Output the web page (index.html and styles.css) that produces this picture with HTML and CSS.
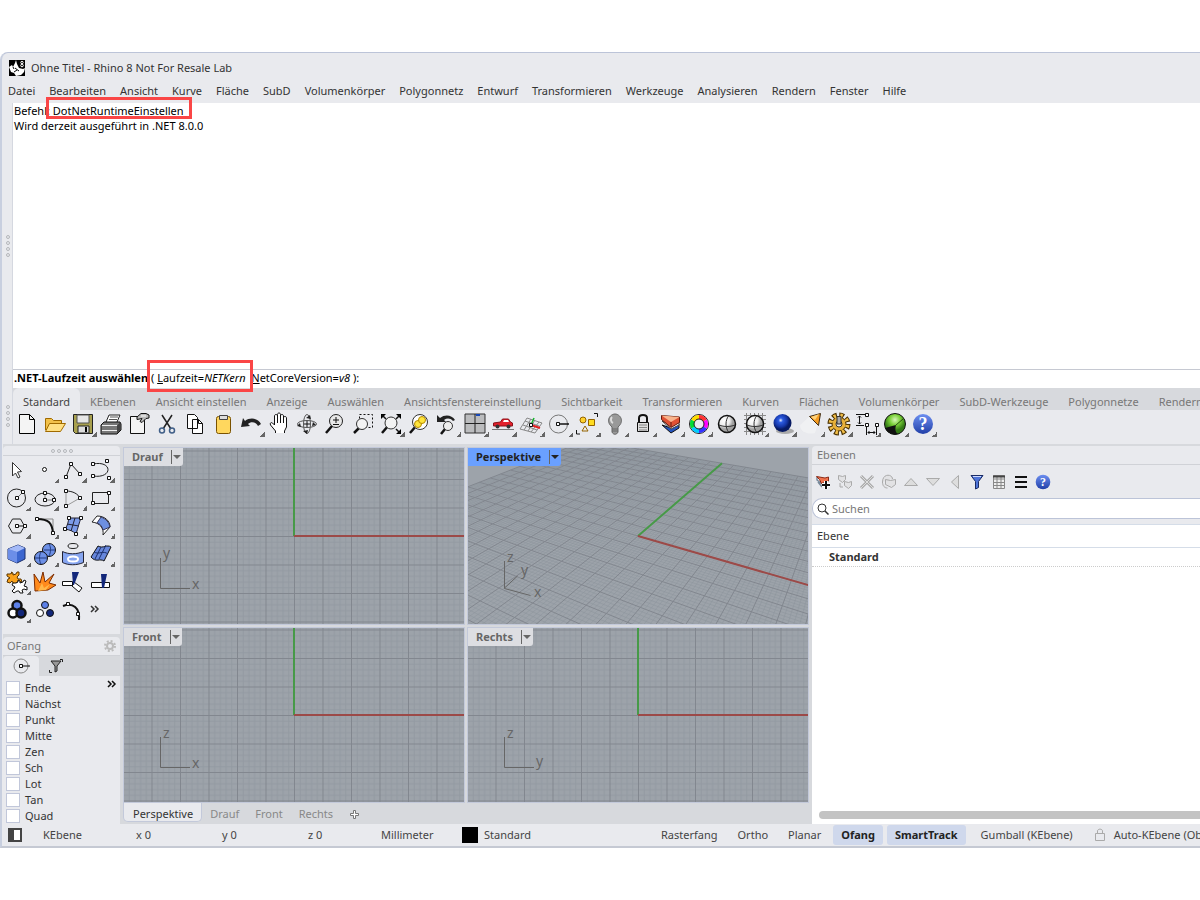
FILE: index.html
```html
<!DOCTYPE html>
<html lang="de">
<head>
    <meta charset="utf-8">
    <title>Ohne Titel - Rhino 8 Not For Resale Lab</title>
    <link rel="stylesheet" href="styles.css">
</head>
<body>
    <div class="window">
        <header class="titlebar">
            <svg width="16" height="16" viewBox="0 0 16 16"><rect width="16" height="16"/><path d="M0 7l3-2 1 2 2-4 1-3 1 4 2 4 4 1 2-1-1 4-3 3-5 1-2-3-3-1z" fill="#fff"/><path d="M6 8l4 3M4 7l1 2M5 12l3-2" stroke="#000"/><circle cx="13" cy="2.500" r="1.200" fill="none" stroke="#fff"/><circle cx="13" cy="5.500" r="1.300" fill="none" stroke="#fff"/></svg>
            <span>Ohne Titel - Rhino 8 Not For Resale Lab</span>
        </header>
        <nav class="menubar">
            <button>Datei</button><button>Bearbeiten</button><button>Ansicht</button><button>Kurve</button><button>Fläche</button><button>SubD</button><button>Volumenkörper</button><button>Polygonnetz</button><button>Entwurf</button><button>Transformieren</button><button>Werkzeuge</button><button>Analysieren</button><button>Rendern</button><button>Fenster</button><button>Hilfe</button>
        </nav>

        <section class="command">
            <div class="grip"><i></i><i></i><i></i><i></i></div>
            <div class="command-body">
                <div class="history">
                    <div>Befehl: <span class="boxed">DotNetRuntimeEinstellen</span></div>
                    <div>Wird derzeit ausgeführt in .NET 8.0.0</div>
                </div>
                <div class="prompt"><b>.NET-Laufzeit auswählen</b> <span class="boxed tall">( <u>L</u>aufzeit=<em>NETKern</em></span>&nbsp; <u>N</u>etCoreVersion=<em>v8</em> ):</div>
            </div>
        </section>

        <section class="toolbars">
            <div class="grip"><i></i><i></i><i></i><i></i></div>
            <div class="toolbars-body">
                <div class="tabs">
                    <button class="active">Standard</button><button>KEbenen</button><button>Ansicht einstellen</button><button>Anzeige</button><button>Auswählen</button><button>Ansichtsfenstereinstellung</button><button>Sichtbarkeit</button><button>Transformieren</button><button>Kurven</button><button>Flächen</button><button>Volumenkörper</button><button>SubD-Werkzeuge</button><button>Polygonnetze</button><button>Rendern</button>
                </div>
                <div class="tools">
                    <button class="tool" aria-label="Neu"><svg viewBox="0 0 24 24"><path d="M4.500 2.500h10l5 5v14h-15z" fill="#f4f4f4" stroke="#000"/><path d="M14.500 2.500v5h5" fill="none" stroke="#000"/></svg></button>
                    <button class="tool" aria-label="Öffnen"><svg viewBox="0 0 24 24"><path d="M2.500 18V6.500h6l2 2h8v4" fill="#f2c14a" stroke="#a06a00"/><path d="M2.500 19.500l4-8h16l-5 8z" fill="#ffe083" stroke="#a06a00"/></svg></button>
                    <button class="tool fly" aria-label="Speichern"><svg viewBox="0 0 24 24"><path d="M2.500 2.500h19v19h-17l-2-2z" fill="#a8a04e" stroke="#222"/><path d="M6 3h12v8H6z" fill="#e6e6e6" stroke="#555"/><path d="M7 14h11v7H7z" fill="#ddd" stroke="#222"/><path d="M14 15h2v5h-2z"/></svg></button>
                    <button class="tool" aria-label="Drucken"><svg viewBox="0 0 24 24"><path d="M7 10l3-7h11l-3 7" fill="#fff" stroke="#222"/><path d="M11 5h8M10 7.500h8" stroke="#555"/><path d="M2 13l3-3h16l1 2v6l-4 4H2z" fill="#777" stroke="#111"/><path d="M3 13.500h15M3 18.500h15" stroke="#eee"/><path d="M18 13.500v8l3-3v-8z" fill="#444"/></svg></button>
                    <button class="tool" aria-label="Dokumenteigenschaften"><svg viewBox="0 0 24 24"><path d="M3.500 4.500h14v17h-14z" fill="#f4f4f4" stroke="#111"/><path d="M10 5l4-3.500h5l3 1.500v3l-3 .5-4 4-2-1 2-3-5 1z" fill="#bbb" stroke="#111"/><path d="M14 4h5" stroke="#fff"/></svg></button>
                    <button class="tool" aria-label="Ausschneiden"><svg viewBox="0 0 24 24"><path d="M7 3l9 14M17 3L8 17" stroke="#222" stroke-width="1.500"/><circle cx="7" cy="18.500" r="2.500" fill="none" stroke="#405f88" stroke-width="1.500"/><circle cx="17" cy="18.500" r="2.500" fill="none" stroke="#405f88" stroke-width="1.500"/></svg></button>
                    <button class="tool" aria-label="Kopieren"><svg viewBox="0 0 24 24"><path d="M4.500 2.500h7l3 3v11h-10zM9.500 7.500h6l4 4v10h-10z" fill="#fff" stroke="#111"/><path d="M15.500 7.500v4h4" fill="none" stroke="#111"/></svg></button>
                    <button class="tool" aria-label="Einfügen"><svg viewBox="0 0 24 24"><rect x="5.500" y="4.500" width="14" height="17" rx="2" fill="#ffd75e" stroke="#7a5200"/><path d="M8.500 3.500h8v4h-8z" fill="#ddd" stroke="#444"/></svg></button>
                    <button class="tool fly" aria-label="Rückgängig"><svg viewBox="0 0 24 24"><path d="M2 15l2-9 2 3c5-4 13-3 16 3l-3 2c-2-4-7-5-10-2l2 2z" fill="#222"/></svg></button>
                    <button class="tool" aria-label="Verschieben"><svg viewBox="0 0 24 24"><path d="M8.500 21v-2l-5-6c-1-2 1-3 2-2l2 2V4c0-2 3-2 3 0V2.500c0-2 3-2 3 0V4c0-2 3-2 3 0v2c0-2 3-2 3 0v9l-2 4v2" fill="#fff" stroke="#111"/><path d="M10.500 4v7M13.500 4v7M16.500 5v6" stroke="#111"/></svg></button>
                    <button class="tool" aria-label="Drehen"><svg viewBox="0 0 24 24" fill="none" stroke="#555"><ellipse cx="12" cy="12" rx="9.500" ry="3.500"/><ellipse cx="12" cy="12" rx="3.500" ry="9.500"/><path d="M11 6l4-3 1 4zM8 19l4 3 1-4zM5 11l-3 3 4 1zM18 10l3 3-4 1z" fill="#222" stroke="none"/><path d="M12 9v6M9 12h6" stroke="#111"/></svg></button>
                    <button class="tool" aria-label="Zoom dynamisch"><svg viewBox="0 0 24 24"><path d="M9 14l-6 7" stroke="#111" stroke-width="2.500"/><circle cx="13" cy="9" r="6.500" fill="#e8e8e8" stroke="#222"/><path d="M10 8h6M13 5v6M10 12.500h6" stroke="#111"/></svg></button>
                    <button class="tool" aria-label="Zoom Fenster"><svg viewBox="0 0 24 24"><path d="M8.500 2.500h13v13h-13z" fill="none" stroke="#111" stroke-dasharray="2 2"/><path d="M8 16l-5 5" stroke="#111" stroke-width="2.500"/><circle cx="11" cy="12" r="5.500" fill="#f3f3f3" stroke="#333"/></svg></button>
                    <button class="tool fly" aria-label="Zoom Grenzen"><svg viewBox="0 0 24 24"><path d="M9 14l-6 7" stroke="#111" stroke-width="2.500"/><circle cx="12" cy="11" r="6" fill="#f3f3f3" stroke="#333"/><path d="M2 7V2h5zM17 2h5v5zM22 17v5h-5z"/><path d="M3 3l4 4M21 3l-4 4M21 21l-4-4" stroke="#111" stroke-width="1.500"/></svg></button>
                    <button class="tool" aria-label="Zoom Auswahl"><svg viewBox="0 0 24 24"><path d="M9 14l-6 7" stroke="#111" stroke-width="2.500"/><circle cx="13" cy="10" r="7.500" fill="#fff" stroke="#333"/><circle cx="11" cy="12" r="3.500" fill="#ffe53b" stroke="#b58900"/><circle cx="15" cy="8" r="3.500" fill="#ffe53b" stroke="#b58900"/></svg></button>
                    <button class="tool fly" aria-label="Ansicht zurück"><svg viewBox="0 0 24 24"><path d="M2 10V3l3 3c5-4 12-3 15 2l-2 1c-3-3-6-3-9-1l2 2z" fill="#222"/><path d="M10 17l-4 5" stroke="#111" stroke-width="2.500"/><circle cx="13" cy="14" r="4.500" fill="#eee" stroke="#333"/></svg></button>
                    <button class="tool fly" aria-label="4 Ansichtsfenster"><svg viewBox="0 0 24 24"><path d="M2 2h20v19H2z" fill="#bbbcbe" stroke="#333"/><path d="M12 2v19M2 11.500h20" stroke="#222"/><path d="M13 3h4" stroke="#1849b8" stroke-width="2"/></svg></button>
                    <button class="tool fly" aria-label="Rechte Ansicht"><svg viewBox="0 0 24 24"><path d="M2.500 14v-3l7-1 2-3h6l2 3 2 1v3z" fill="#e3202b" stroke="#8c1118"/><path d="M12 10l1-2h4l1 2z" fill="#fff"/><circle cx="6.500" cy="14.500" r="2" fill="#333"/><circle cx="17.500" cy="14.500" r="2" fill="#333"/><path d="M1 17.500h22" stroke="#777"/></svg></button>
                    <button class="tool fly" aria-label="KEbene setzen"><svg viewBox="0 0 24 24"><path d="M8 6l15 5-7 10-15-4zM6 9l14 5M4 13l14 5M12 7L5 18M16 8l-7 11M20 10l-8 10" fill="none" stroke="#888"/><path d="M12 13l3-7" stroke="#12b32a" stroke-width="1.500"/><path d="M12 13l9 3" stroke="#e32020" stroke-width="2"/><path d="M10.500 11.500h3v3h-3z" fill="#fff" stroke="#111"/></svg></button>
                    <button class="tool fly" aria-label="Objektfang"><svg viewBox="0 0 24 24"><circle cx="11.500" cy="12" r="9" fill="none" stroke="#777"/><path d="M12 12h10" stroke="#111" stroke-width="1.500"/><path d="M9.500 10.500h3v3h-3z" fill="#fff" stroke="#111"/></svg></button>
                    <button class="tool fly" aria-label="Auswählen"><svg viewBox="0 0 24 24"><circle cx="8" cy="8" r="3" fill="#ffd22e" stroke="#946300"/><path d="M13.500 7.500h6v6h-6z" fill="#ffdc20" stroke="#946300"/><path d="M10 14l3 5H7z" fill="#eee" stroke="#946300"/><path d="M19 1.500h3.500V5M1.500 18v4H5" fill="none" stroke="#111"/></svg></button>
                    <button class="tool fly" aria-label="Ausblenden"><svg viewBox="0 0 24 24"><path d="M9 15C2 9 7 2 12 2s10 7 3 13v5c-1 3-5 3-6 0z" fill="#999" stroke="#666"/><path d="M9 5c-2 2-1 5 1 6" stroke="#ddd" stroke-width="2" fill="none"/><path d="M9 17h6M9 19h6" stroke="#666"/></svg></button>
                    <button class="tool fly" aria-label="Sperren"><svg viewBox="0 0 24 24"><path d="M8 11V6c0-4 8-4 8 0v5" fill="none" stroke="#111" stroke-width="2"/><path d="M6.500 10.500h11v9h-11z" fill="#ddd" stroke="#111"/><path d="M8 13h8M8 15.500h8M8 18h8" stroke="#888"/></svg></button>
                    <button class="tool fly" aria-label="Ebenen"><svg viewBox="0 0 24 24"><path d="M3 13l9 8 8-5v-4l-8 4z" fill="#2353bd" stroke="#111"/><path d="M3 9l9 8 8-4V9l-8 4z" fill="#fff" stroke="#444"/><path d="M2.500 3.500v4l9.500 8 8.500-5V5z" fill="#e05234" stroke="#621a0d"/><path d="M2.500 3.500l18 1.500-8.500 5z" fill="#f8b48c"/><path d="M12 10v5" stroke="#621a0d"/></svg></button>
                    <button class="tool fly" aria-label="Eigenschaften"><svg viewBox="0 0 24 24" fill="none" stroke-width="4"><circle cx="12" cy="12" r="9.500" stroke="#222" stroke-width="1"/><path d="M12 5a7 7 0 0 1 6 3.500" stroke="#f33"/><path d="M18 8.500a7 7 0 0 1 0 7" stroke="#f0f"/><path d="M18 15.500a7 7 0 0 1-6 3.500" stroke="#33f"/><path d="M12 19a7 7 0 0 1-6-3.500" stroke="#0cf"/><path d="M6 15.500a7 7 0 0 1 0-7" stroke="#0d3"/><path d="M6 8.500A7 7 0 0 1 12 5" stroke="#fd0"/><circle cx="12" cy="12" r="5" stroke="#222" stroke-width="1"/></svg></button>
                    <button class="tool" aria-label="Schattiert"><svg viewBox="0 0 24 24"><circle cx="12" cy="12" r="8.500" fill="url(#greyball)" stroke="#111" stroke-width="1.500"/><path d="M14 3.500c-4 4-4 13 0 17M4 13c5 2 11 2 16 0" fill="none" stroke="#333"/></svg></button>
                    <button class="tool fly" aria-label="Schattiertes Fenster"><svg viewBox="0 0 24 24"><path d="M1 3.500h22M1 7.500h22M1 11.500h22M1 15.500h22M1 19.500h22M3.500 1v22M7.500 1v22M11.500 1v22M15.500 1v22M19.500 1v22" stroke="#888"/><circle cx="12" cy="12" r="8.500" fill="url(#greyball)" stroke="#111" stroke-width="1.500"/><path d="M14 3.500c-4 4-4 13 0 17M4 13c5 2 11 2 16 0" fill="none" stroke="#333"/></svg></button>
                    <button class="tool fly" aria-label="Rendern"><svg viewBox="0 0 24 24"><ellipse cx="14" cy="19" rx="9" ry="3" fill="#aaa"/><circle cx="11.500" cy="11" r="9" fill="url(#blueball)"/></svg></button>
                    <button class="tool fly" aria-label="Licht"><svg viewBox="0 0 24 24"><path d="M11 4L1 13c0 7 8 10 15 8l3-9z" fill="#f8f8f8" opacity=".5"/><path d="M10.500 4.500l11-3-2 12z" fill="#f59b20" stroke="#3d2a12"/><path d="M12 5l8-3-4 6z" fill="#ffd27a"/></svg></button>
                    <button class="tool fly" aria-label="Optionen"><svg viewBox="0 0 24 24"><circle cx="12" cy="12" r="8.500" fill="none" stroke="#493000" stroke-width="6" stroke-dasharray="4.400 2.280"/><circle cx="12" cy="12" r="7" fill="#e7b03a" stroke="#493000"/><circle cx="12" cy="12" r="8.500" fill="none" stroke="#f0bd48" stroke-width="4" stroke-dasharray="2.400 4.280" stroke-dashoffset="-1"/><circle cx="12" cy="12" r="3" fill="#eee" stroke="#333"/><path d="M10 4.500h4V12h-4z" fill="#aaa" stroke="#333"/></svg></button>
                    <button class="tool fly" aria-label="Bemaßung"><svg viewBox="0 0 24 24" fill="none" stroke="#111"><path d="M1 2.500h9M1 13.500h8M4.500 4v8M3 5.500L4.500 4 6 5.500M3 10.500L4.500 12 6 10.500M11.500 13v10M21.500 13v10M13 20.500h7M14.500 19L13 20.500l1.500 1.500M18.500 19l1.500 1.500-1.500 1.500"/><path d="M10.500 1.500h3v3h-3zM10.500 11.500h3v3h-3zM20.500 11.500h3v3h-3z" fill="#fff"/></svg></button>
                    <button class="tool fly" aria-label="Grasshopper"><svg viewBox="0 0 24 24"><circle cx="12" cy="12" r="10.500" fill="url(#greenball)" stroke="#111"/><path d="M2 16l11-3c-1 4-1 7 2 9-6 1-11-1-13-6z" fill="#111"/><path d="M13 13l7-6" stroke="#294f12"/></svg></button>
                    <button class="tool fly" aria-label="Hilfe"><svg viewBox="0 0 24 24"><circle cx="12" cy="12" r="10" fill="url(#helpball)"/><text class="q" x="12" y="18">?</text></svg></button>
                </div>
            </div>
        </section>

        <main class="main">
            <aside class="sidebar">
                <div class="toolbox">
                    <div class="toolbox-grip"><i></i><i></i><i></i><i></i></div>
                    <div class="toolbox-grid">
                        <button class="tool" aria-label="Auswahl"><svg viewBox="0 0 24 24"><path d="M7.500 4.500l9 9-4 .5 2.500 5-2 1-2.500-5-3 3z" fill="#fff" stroke="#333"/></svg></button>
                        <button class="tool fly" aria-label="Punkt"><svg viewBox="0 0 24 24"><circle cx="11.500" cy="11.500" r="2" fill="#fff" stroke="#111"/></svg></button>
                        <button class="tool fly" aria-label="Polylinie"><svg viewBox="0 0 24 24"><path d="M5 19l5-13 9 10" fill="none" stroke="#222"/><path d="M3.500 17.500h3v3h-3zM8.500 4.500h3v3h-3zM17.500 14.500h3v3h-3z" fill="#fff" stroke="#111"/></svg></button>
                        <button class="tool fly" aria-label="Kurve"><svg viewBox="0 0 24 24"><path d="M4 6c20-4 20 15 0 12" fill="none" stroke="#222"/><path d="M2.500 4.500h3v3h-3zM2.500 16.500h3v3h-3zM16.500 1.500h3v3h-3zM18.500 18.500h3v3h-3z" fill="#fff" stroke="#111"/></svg></button>

                        <button class="tool fly" aria-label="Kreis"><svg viewBox="0 0 24 24"><circle cx="11.500" cy="12" r="9" fill="none" stroke="#222"/><path d="M12 12l6-6" stroke="#777"/><path d="M10.500 10.500h3v3h-3zM16.500 4.500h3v3h-3z" fill="#fff" stroke="#111"/></svg></button>
                        <button class="tool fly" aria-label="Ellipse"><svg viewBox="0 0 24 24"><ellipse cx="12" cy="13.500" rx="10" ry="6.500" fill="none" stroke="#222"/><path d="M12 14h9M12 14V6" stroke="#777"/><path d="M10.500 12.500h3v3h-3zM10.500 5.500h3v3h-3zM19.500 12.500h3v3h-3z" fill="#fff" stroke="#111"/></svg></button>
                        <button class="tool fly" aria-label="Bogen"><svg viewBox="0 0 24 24"><path d="M5 20V5M5 20l14-8" stroke="#999"/><path d="M5 5c7 0 12 3 14 7" fill="none" stroke="#222"/><path d="M3.500 3.500h3v3h-3zM3.500 18.500h3v3h-3zM17.500 10.500h3v3h-3z" fill="#fff" stroke="#111"/></svg></button>
                        <button class="tool fly" aria-label="Rechteck"><svg viewBox="0 0 24 24"><path d="M3.500 6.500h16v11h-16z" fill="none" stroke="#222"/><path d="M2.500 15.500h3v3h-3zM18.500 5.500h3v3h-3z" fill="#fff" stroke="#111"/></svg></button>

                        <button class="tool fly" aria-label="Polygon"><svg viewBox="0 0 24 24"><path d="M3.500 12l4-7h8l4 7-4 7h-8z" fill="none" stroke="#222"/><path d="M12 12h8" stroke="#111"/><path d="M10.500 10.500h3v3h-3zM18.500 10.500h3v3h-3z" fill="#fff" stroke="#111"/></svg></button>
                        <button class="tool fly" aria-label="Verrundung"><svg viewBox="0 0 24 24"><path d="M4 5h16v15" fill="none" stroke="#888"/><path d="M4 5c12 0 15 4 16 14" fill="none" stroke="#111" stroke-width="2"/><path d="M2.500 3.500h3v3h-3zM18.500 17.500h3v3h-3z" fill="#fff" stroke="#111"/></svg></button>
                        <button class="tool fly" aria-label="Fläche"><svg viewBox="0 0 24 24"><path d="M8 4h12c-2 5-3 10-5 16-3-3-6-4-11-5 3-4 3-7 4-11z" fill="#7c9be8" stroke="#223"/><path d="M14 4l-4 13M6 10l12 2" stroke="#223"/><path d="M6.500 2.500h3v3h-3zM18.500 2.500h3v3h-3zM2.500 13.500h3v3h-3zM13.500 18.500h3v3h-3z" fill="#fff" stroke="#111"/></svg></button>
                        <button class="tool fly" aria-label="Extrusion"><svg viewBox="0 0 24 24"><path d="M3 8l5-6c8 0 13 5 13 11l-7 8c1-7-3-12-11-13z" fill="#fff" stroke="#222"/><path d="M12 3c5 2 8 5 9 10l-7 3c-1-4-3-6-6-7z" fill="#6d8fe0" stroke="#335"/></svg></button>

                        <button class="tool fly" aria-label="Quader"><svg viewBox="0 0 24 24"><path d="M3 7l10-4 7 3v11l-8 4-9-4z" fill="#3c66cf" stroke="#1b2f6b"/><path d="M3 7l9 3v11l-9-4z" fill="#6c8ee8"/><path d="M3 7l10-4 7 3-8 4z" fill="#a4baf8"/></svg></button>
                        <button class="tool fly" aria-label="Boolesche Operation"><svg viewBox="0 0 24 24"><circle cx="16" cy="8" r="6.500" fill="#6d90e6" stroke="#111"/><circle cx="8" cy="16" r="6.500" fill="#6d90e6" stroke="#111"/><path d="M2 16h12M8 10c-2 3-2 9 0 12M11 8h11M16 2c2 3 2 8 0 12" fill="none" stroke="#223b80"/></svg></button>
                        <button class="tool fly" aria-label="Projektion"><svg viewBox="0 0 24 24"><ellipse cx="12" cy="4" rx="5" ry="2.500" fill="none" stroke="#222"/><path d="M1.500 9.500c6 3 14 3 21 0v11c-7 3-15 3-21 0z" fill="#86a5f0" stroke="#223"/><ellipse cx="12" cy="17" rx="5" ry="2.500" fill="none" stroke="#fff" stroke-width="2"/></svg></button>
                        <button class="tool fly" aria-label="Netz"><svg viewBox="0 0 24 24"><path d="M2 15l7-11c5 3 9-2 13 1l-7 14c-4-3-8 2-13-4z" fill="#6787dc" stroke="#111"/><path d="M5 10c5 3 9-2 14 2M10 17l7-14M6 17l6-12" fill="none" stroke="#1b2f6b"/></svg></button>

                        <button class="tool fly" aria-label="Verbinden"><svg viewBox="0 0 24 24"><path d="M6 2l2 1v2l3-1 1-2h2l0 3-2 2 1 2 3 0 1 3-3 0-2 0-1 2-3-1-1-2-2 2-3-1 1-3 2-1-3-2 0-2 3 0 2-1z" fill="#f9a11b" stroke="#5a3600"/><path d="M13 10l2 1v2l3-1 1-2 2 1-1 3-1 2 3 1v3l-3-1-2 1 1 3-3 0-1-2-2 0-3 2-2-2 2-2 1-2-3-2 1-2 3 0 2-1z" fill="#fff" stroke="#111"/></svg></button>
                        <button class="tool" aria-label="Auflösen"><svg viewBox="0 0 24 24"><path d="M2 21L1 4l6 9 3-11 2 10 9-8-5 9 7 2-8 5z" fill="#ff8a1c" stroke="#7b2b00"/><path d="M5 21l4-8 2 5 6-4-4 6z" fill="#ffb84a"/></svg></button>
                        <button class="tool" aria-label="Trimmen"><svg viewBox="0 0 24 24"><path d="M1.500 11.500h10v4h-10zM13 12l8 6-3 4-7-6z" fill="#fff" stroke="#111"/><path d="M11 2h7l-5 13h-1z" fill="#12277a"/></svg></button>
                        <button class="tool" aria-label="Teilen"><svg viewBox="0 0 24 24"><path d="M2.500 12.500h18v5h-18z" fill="#fff" stroke="#111"/><path d="M12 4h6l-3 14h-2z" fill="#12277a"/></svg></button>

                        <button class="tool fly" aria-label="Gruppieren"><svg viewBox="0 0 24 24" stroke="#111" stroke-width="2.500"><circle cx="12" cy="7.500" r="4.500" fill="#5c80e8"/><circle cx="8" cy="15" r="4.500" fill="#fff"/><circle cx="16" cy="15" r="4.500" fill="#12277a"/></svg></button>
                        <button class="tool" aria-label="Gruppierung aufheben"><svg viewBox="0 0 24 24" stroke="#111"><circle cx="12" cy="7" r="3.500" fill="#5c80e8"/><circle cx="7" cy="15" r="3.500" fill="#fff"/><circle cx="17" cy="15" r="3.500" fill="#12277a"/></svg></button>
                        <button class="tool" aria-label="Punkte bearbeiten"><svg viewBox="0 0 24 24"><path d="M2 8c10-4 17 2 16 14" fill="none" stroke="#111" stroke-width="2"/><path d="M5.500 4.500h3v3h-3zM15.500 14.500h3v3h-3z" fill="#fff" stroke="#111"/></svg></button>
                        <button class="tool" aria-label="Mehr"><svg viewBox="0 0 24 24" fill="none" stroke="#333" stroke-width="1.500"><path d="M2 8l3 3-3 3M6 8l3 3-3 3"/></svg></button>
                    </div>
                </div>

                <div class="osnap">
                    <div class="osnap-title"><span>OFang</span><svg width="12" height="12" viewBox="0 0 12 12" fill="none" stroke="#bbb"><circle cx="6" cy="6" r="3" stroke-width="2"/><circle cx="6" cy="6" r="5" stroke-width="2" stroke-dasharray="2 1.930"/></svg></div>
                    <div class="osnap-tabs">
                        <button class="active" aria-label="Objektfang"><svg width="20" height="16" viewBox="0 0 20 16"><circle cx="9" cy="8" r="7" fill="none" stroke="#888"/><path d="M9 8h9" stroke="#111"/><path d="M7.500 6.500h3v3h-3z" fill="#fff" stroke="#111"/></svg></button>
                        <button aria-label="Auswahlfilter"><svg width="16" height="16" viewBox="0 0 16 16"><path d="M3 3h10L9 8v5l-2 1V8z" fill="#999" stroke="#222"/><path d="M12 1.500h2.500V4M1.500 12v2.500H4" fill="none" stroke="#222"/></svg></button>
                    </div>
                    <div class="osnap-list">
                        <button class="more" aria-label="Mehr"><svg width="10" height="8" viewBox="0 0 10 8" fill="none" stroke="#111" stroke-width="1.500"><path d="M1 1l3 3-3 3M5 1l3 3-3 3"/></svg></button>
                        <label><input type="checkbox">Ende</label>
                        <label><input type="checkbox">Nächst</label>
                        <label><input type="checkbox">Punkt</label>
                        <label><input type="checkbox">Mitte</label>
                        <label><input type="checkbox">Zen</label>
                        <label><input type="checkbox">Sch</label>
                        <label><input type="checkbox">Lot</label>
                        <label><input type="checkbox">Tan</label>
                        <label><input type="checkbox">Quad</label>
                    </div>
                </div>
            </aside>

            <section class="views">
                <div class="view-grid">
                    <div class="view">
                        <button class="view-name"><span>Drauf</span><i></i></button>
                        <svg class="grid" viewBox="-170 -88 340 176" preserveAspectRatio="xMidYMid slice">
                            <rect class="plane" x="-800" y="-400" width="1600" height="800"/>
                            <path class="axis-y" d="M0 0V-400"/><path class="axis-x" d="M0 0H800"/>
                            <path class="triad" d="M-133.500 22V52.500H-104"/><text x="-131" y="22">y</text><text x="-102" y="53">x</text>
                        </svg>
                    </div>
                    <div class="view active">
                        <button class="view-name"><span>Perspektive</span><i></i></button>
                        <svg class="grid" viewBox="-170 -88 340 176" preserveAspectRatio="xMidYMid slice">
                            <path class="minor" id="minor"/><path class="major" id="major"/>
                            <path class="axis-y" id="axis-y"/><path class="axis-x" id="axis-x"/>
                            <path class="triad" d="M-133.500 25V52.500l26 7M-133.500 52l13-12"/><text x="-131" y="26">z</text><text x="-117" y="39">y</text><text x="-104" y="61">x</text>
                        </svg>
                    </div>
                    <div class="view">
                        <button class="view-name"><span>Front</span><i></i></button>
                        <svg class="grid" viewBox="-170 -88 340 176" preserveAspectRatio="xMidYMid slice">
                            <rect class="plane" x="-800" y="-400" width="1600" height="800"/>
                            <path class="axis-y" d="M0 0V-400"/><path class="axis-x" d="M0 0H800"/>
                            <path class="triad" d="M-133.500 22V52.500H-104"/><text x="-131" y="23">z</text><text x="-102" y="53">x</text>
                        </svg>
                    </div>
                    <div class="view">
                        <button class="view-name"><span>Rechts</span><i></i></button>
                        <svg class="grid" viewBox="-170 -88 340 176" preserveAspectRatio="xMidYMid slice">
                            <rect class="plane" x="-800" y="-400" width="1600" height="800"/>
                            <path class="axis-y" d="M0 0V-400"/><path class="axis-x" d="M0 0H800"/>
                            <path class="triad" d="M-133.500 22V52.500H-104"/><text x="-131" y="23">z</text><text x="-102" y="51">y</text>
                        </svg>
                    </div>
                </div>
                <div class="view-tabs">
                    <button class="active">Perspektive</button><button>Drauf</button><button>Front</button><button>Rechts</button>
                    <button aria-label="Neues Layout"><svg width="11" height="11" viewBox="0 0 11 11"><path d="M4.500 1.500h2v3h3v2h-3v3h-2v-3h-3v-2h3z" fill="#fff" stroke="#777"/></svg></button>
                </div>
            </section>

            <section class="layers">
                <h2>Ebenen</h2>
                <div class="layer-tools">
                    <button aria-label="Neue Ebene"><svg viewBox="0 0 16 16"><path d="M2 3v3l5 4M3 8l4 5" fill="none" stroke="#789" stroke-width="1.500"/><path d="M1.500 2.500l3 3 2 4 7-2.500v-4L10 4z" fill="#f0734e" stroke="#8c2b16"/><path d="M7 11h8M11 7v8" stroke="#fff" stroke-width="4"/><path d="M7 11h8M11 7v8" stroke="#111" stroke-width="2"/></svg></button>
                    <button aria-label="Neue Unterebene"><svg viewBox="0 0 16 16" fill="#e2e2e4" stroke="#aaa"><path d="M1.500 1.500l4 1 3-1v4l-3 3-4-3zM7.500 7.500l4 1 3-1v4l-3 3-4-3zM3 9v4h3"/></svg></button>
                    <button aria-label="Löschen"><svg viewBox="0 0 16 16"><path d="M2 2l12 12M14 2L2 14" stroke="#aaa" stroke-width="3"/><path d="M2 2l12 12M14 2L2 14" stroke="#ddd"/></svg></button>
                    <button aria-label="Duplizieren"><svg viewBox="0 0 16 16" fill="#e2e2e4" stroke="#aaa"><path d="M1.500 8c0-9 10-8 10-3M1.500 8c0 4 2 6 5 6"/><path d="M4.500 5.500l5 1 5-1v5l-4 3-6-3z"/></svg></button>
                    <button aria-label="Nach oben"><svg viewBox="0 0 16 16"><path d="M1.500 11.500L8 4.500l6.500 7z" fill="#ddd" stroke="#aaa"/></svg></button>
                    <button aria-label="Nach unten"><svg viewBox="0 0 16 16"><path d="M1.500 4.500L8 11.500l6.500-7z" fill="#ddd" stroke="#aaa"/></svg></button>
                    <button aria-label="Zurück"><svg viewBox="0 0 16 16"><path d="M11.500 1.500v13l-7-6.500z" fill="#ddd" stroke="#aaa"/></svg></button>
                    <button aria-label="Filter"><svg viewBox="0 0 16 16"><path d="M2 1.500h12l-4.500 6v6l-3 1.500V7.500z" fill="#4e74d8" stroke="#1a2c66"/><path d="M4 2.500h8" stroke="#cdd9ff"/></svg></button>
                    <button aria-label="Spalten"><svg viewBox="0 0 16 16"><path d="M2.500 1.500h11v13h-11zM2.500 5h11M2.500 8.500h11M2.500 11.500h11M6 1.500v13M10 1.500v13" fill="#eee" stroke="#888"/><path d="M2 2.500h12" stroke="#444" stroke-width="2"/></svg></button>
                    <button aria-label="Menü"><svg viewBox="0 0 16 16"><path d="M2 3h12M2 8h12M2 13h12" stroke="#111" stroke-width="2"/></svg></button>
                    <button aria-label="Hilfe"><svg viewBox="0 0 24 24"><circle cx="12" cy="12" r="11" fill="url(#helpball)"/><text class="q" x="12" y="18">?</text></svg></button>
                </div>
                <label class="search">
                    <svg width="12" height="12" viewBox="0 0 12 12" fill="none" stroke="#333"><circle cx="5" cy="5" r="4"/><path d="M8 8l3.500 3.500" stroke-width="1.500"/></svg>
                    <input type="text" placeholder="Suchen" aria-label="Suchen">
                </label>
                <table class="layer-table">
                    <thead><tr><th>Ebene</th></tr></thead>
                    <tbody><tr><td>Standard</td></tr></tbody>
                </table>
                <div class="scrollbar"></div>
            </section>
        </main>

        <footer class="status">
            <button class="panel-toggle" aria-label="Seitenleiste"><svg width="14" height="14" viewBox="0 0 14 14"><path d="M1 1h12v12H1z" fill="#fff" stroke="#444" stroke-width="2"/><path d="M1 1h5v12H1z" fill="#444"/></svg></button>
            <button class="cplane">KEbene</button>
            <span class="coord">x 0</span>
            <span class="coord">y 0</span>
            <span class="coord last">z 0</span>
            <button class="units">Millimeter</button>
            <button class="layer"><i></i>Standard</button>
            <div class="modes">
                <button>Rasterfang</button><button>Ortho</button><button>Planar</button><button class="on">Ofang</button><button class="on">SmartTrack</button><button class="gumball">Gumball (KEbene)</button><button class="auto"><svg width="12" height="14" viewBox="0 0 12 14" fill="none" stroke="#aaa"><path d="M1.500 5.500h9v7h-9zM3.500 5.500V3c0-2.500 5-2.500 5 0v2.500"/></svg>Auto-KEbene (Objekt)</button>
            </div>
        </footer>
    </div>

    <svg width="0" height="0" class="defs">
        <defs>
            <pattern id="cells" width="28.500" height="28.500" patternUnits="userSpaceOnUse">
                <path class="minor" d="M6.200 0v28.500M11.900 0v28.500M17.600 0v28.500M23.300 0v28.500M0 6.200h28.500M0 11.900h28.500M0 17.600h28.500M0 23.300h28.500"/>
                <path class="major" d="M.5 0v28.500M0 .5h28.500"/>
            </pattern>
            <radialGradient id="greyball" cx=".35" cy=".3"><stop offset="0" stop-color="#fff"/><stop offset=".6" stop-color="#eee"/><stop offset="1" stop-color="#a0a0a0"/></radialGradient>
            <radialGradient id="blueball" cx=".4" cy=".35"><stop offset="0" stop-color="#e8efff"/><stop offset=".25" stop-color="#2c5be0"/><stop offset=".7" stop-color="#1637a8"/><stop offset="1" stop-color="#071a63"/></radialGradient>
            <radialGradient id="greenball" cx=".5" cy=".3"><stop offset="0" stop-color="#d9f5bb"/><stop offset=".5" stop-color="#7ad038"/><stop offset="1" stop-color="#347a16"/></radialGradient>
            <linearGradient id="helpball" x2="0" y2="1"><stop offset="0" stop-color="#6d8ff0"/><stop offset="1" stop-color="#213fa8"/></linearGradient>
        </defs>
    </svg>
    <script src="grid.js"></script>
</body>
</html>
```
FILE: styles.css
```css
* { box-sizing: border-box; }
body { margin: 0; padding-top: 52px; background: #fff; font-family: "Noto Sans", "Open Sans", sans-serif; font-size: 11px; line-height: 16px; color: #333; overflow-x: hidden; }
button { padding: 0; border: 0; background: none; font: inherit; color: inherit; white-space: nowrap; }
svg { display: block; flex: none; }
.defs { position: absolute; }

.window { border: 1px solid #bcc4d8; border-right: 0; border-left: 2px solid #c8cfdf; border-bottom: 2px solid #c5c9d3; border-top-left-radius: 8px; background: #e9eaee; padding-left: 1px; overflow: hidden; }

.titlebar { display: flex; align-items: center; gap: 6px; height: 27px; padding: 2px 0 0 6px; }
.menubar { display: flex; align-items: flex-start; gap: 14px; height: 23px; padding: 3px 0 0 5px; }

/* command line */
.command { display: flex; color: #000; }
.grip { flex: none; width: 10px; display: flex; flex-direction: column; align-items: center; justify-content: center; gap: 2px; border-right: 1px solid #d5d8e0; }
.grip i, .toolbox-grip i { width: 4px; height: 4px; border: 1px solid #b5b7bb; border-radius: 2px; }
.command-body { flex: 1; min-width: 0; background: #fff; white-space: nowrap; }
.history { min-height: 266px; padding-left: 1px; line-height: 15px; }
.prompt { border-top: 1px solid #c6c9d2; padding: 0 0 1px 1px; height: 19px; }
.boxed { position: relative; }
.boxed::before { content: ""; position: absolute; inset: -6px -8px -1px -7px; border: 3px solid #fa4646; }
.boxed.tall::before { inset: -10px -7px -7px -4px; }

/* toolbars */
.toolbars { display: flex; border-bottom: 2px solid #d7d9dd; }
.toolbars-body { flex: 1; min-width: 0; overflow: hidden; }
.tabs { display: flex; background: #d7d9dd; color: #777; height: 22px; }
.tabs button { padding: 5px 10px 0; }
.tabs .active { background: #e9eaee; color: #444; border-top-right-radius: 6px; border-top-left-radius: 6px; }
.tools { display: flex; padding-bottom: 6px; }
.tool { position: relative; flex: none; width: 28px; height: 28px; padding: 2px; }
.tool svg { width: 24px; height: 24px; }
.fly::after { content: ""; position: absolute; right: 0; bottom: 1px; width: 5px; height: 5px; background: linear-gradient(135deg, transparent 50%, #666 50%); }
.q { font: bold 18px "Liberation Serif", serif; fill: #fff; text-anchor: middle; }

/* sidebar */
.main { display: flex; background: #d7d9dd; }
.sidebar { flex: none; width: 117px; display: flex; flex-direction: column; gap: 3px; }
.toolbox { background: #e9eaee; border-radius: 4px 4px 0 0; padding-bottom: 10px; }
.toolbox-grip { display: flex; justify-content: center; align-items: center; gap: 2px; height: 10px; border-bottom: 1px solid #d0d2d7; }
.toolbox-grid { display: grid; grid-template-columns: repeat(4, 28px); }
.osnap { flex: 1; background: #e9eaee; border-radius: 4px 4px 0 0; }
.osnap-title { display: flex; justify-content: space-between; align-items: center; height: 18px; padding: 0 4px; color: #777; }
.osnap-tabs { display: flex; height: 21px; background: #d7d9dd; border-top: 1px solid #d0d2d7; }
.osnap-tabs button { width: 36px; padding-left: 9px; border-radius: 4px 4px 0 0; }
.osnap-tabs .active { background: #e9eaee; }
.osnap-list { position: relative; padding: 4px 3px 0; }
.osnap-list label { display: flex; align-items: center; gap: 5px; height: 16px; }
.osnap-list input { appearance: none; width: 14px; height: 14px; margin: 0; border: 1px solid #c1c7da; background: #fff; }
.more { position: absolute; right: 3px; top: 4px; }

/* viewports */
.views { flex: 1; min-width: 0; padding: 1px 3px 0; }
.view-grid { display: grid; grid-template-columns: 1fr 1fr; gap: 2px; }
.view { position: relative; border: 1px solid #c3c9da; background: #9da3aa; }
.view-name { position: absolute; left: 0; top: 0; display: flex; align-items: center; gap: 8px; height: 18px; padding: 0 2px 0 8px; background: #dddee2; color: #666; font-weight: bold; border-bottom-right-radius: 3px; }
.view-name i { width: 10px; height: 14px; border-left: 1px solid #666; display: flex; align-items: center; justify-content: flex-end; }
.view-name i::after { content: ""; border: 4px solid transparent; border-top-color: currentColor; border-bottom: 0; }
.active .view-name { background: #6aa0ff; color: #222; }
.grid { width: 100%; height: 176px; }
.view:nth-child(n+3) .grid { height: 174px; }
.grid text { font-size: 14px; fill: #666; }
.plane { fill: url(#cells); }
.minor, .major { fill: none; stroke-width: 1; }
.minor { stroke: #939aa2; }
.major { stroke: #82878f; }
#minor { stroke-width: .5; stroke: #8d949c; }
.axis-x, .axis-y { fill: none; stroke-width: 2; stroke: #9c4a48; }
.axis-y { stroke: #479a48; }
.triad { fill: none; stroke: #666; }
.view-tabs { display: flex; align-items: flex-start; height: 20px; color: #888; }
.view-tabs button { height: 19px; padding: 3px 8px 0; }
.view-tabs .active { padding: 3px 8px 0 9px; background: #e9eaee; color: #333; border: 1px solid #c3c9da; border-top: 0; border-radius: 0 0 5px 5px; }

/* layers panel */
.layers { flex: none; width: 388px; display: flex; flex-direction: column; background: #e9eaee; border-top-left-radius: 4px; }
.layers h2 { margin: 0; padding: 1px 5px; font-size: 11px; font-weight: normal; color: #777; border-bottom: 1px solid #d0d2d7; }
.layer-tools { display: flex; gap: 6px; padding: 9px 3px 8px; }
.layer-tools svg { width: 16px; height: 16px; }
.search { display: flex; align-items: center; gap: 3px; height: 21px; padding-left: 4px; border: 1px solid #bcc4d8; border-right: 0; border-radius: 10px 0 0 10px; background: #fff; }
.search input { flex: 1; border: 0; padding: 0; outline: 0; background: none; font: inherit; }
.search input::placeholder { color: #777; }
.layer-table { margin-top: 5px; width: 100%; border-collapse: collapse; background: #fff; border-top: 1px solid #d5dde8; }
.layer-table th { height: 23px; padding: 0 5px; text-align: left; font-weight: normal; border-bottom: 1px solid #d5dde8; }
.layer-table td { height: 19px; padding: 0 17px; font-weight: bold; border-bottom: 1px dotted #ccc; }
.scrollbar { flex: 1; background: #fff; display: flex; align-items: flex-end; padding: 0 0 5px 7px; }
.scrollbar::after { content: ""; flex: 1; height: 8px; border-radius: 4px 0 0 4px; background: #c3c3c3; }

/* status bar */
.status { display: flex; align-items: center; height: 22px; padding-left: 5px; color: #444; white-space: nowrap; }
.status button, .status span { flex: none; text-align: left; }
.panel-toggle { width: 35px; }
.cplane { width: 93px; }
.coord { width: 86px; }
.coord.last { width: 73px; }
.units { width: 81px; }
.layer { display: flex; align-items: center; gap: 6px; width: 191px; }
.layer i { width: 16px; height: 16px; background: #000; }
.modes { display: flex; flex: 1; min-width: 0; overflow: hidden; gap: 4px; }
.modes button { height: 20px; padding: 0 8px; border-radius: 3px; }
.modes .on { background: #cfd8ec; color: #222; font-weight: bold; }
.modes .gumball { padding: 0 9px 0 11px; }
.modes .auto { display: flex; align-items: center; gap: 8px; }
```
FILE: grid.js
```js
// perspective grid: 140 x 140 units, camera 100 units away, 30 degrees up
var focal = 366;
var dist = 100;
var size = 70;

function project(x, y) {
    var right = 0.866 * x + 0.5 * y;
    var ahead = -0.5 * x + 0.866 * y;
    var depth = dist + 0.866 * ahead;
    return (focal * right / depth).toFixed(2) + ' ' + (-focal * 0.5 * ahead / depth).toFixed(2);
}

function line(x1, y1, x2, y2) {
    return 'M' + project(x1, y1) + 'L' + project(x2, y2);
}

var minor = '';
var major = '';
for (var i = -size; i <= size; i++) {
    var d = line(i, -size, i, size) + line(-size, i, size, i);
    if (i % 5 === 0) {
        major += d;
    } else {
        minor += d;
    }
}

document.getElementById('minor').setAttribute('d', minor);
document.getElementById('major').setAttribute('d', major);
document.getElementById('axis-x').setAttribute('d', line(0, 0, size, 0));
document.getElementById('axis-y').setAttribute('d', line(0, 0, 0, size));
```
